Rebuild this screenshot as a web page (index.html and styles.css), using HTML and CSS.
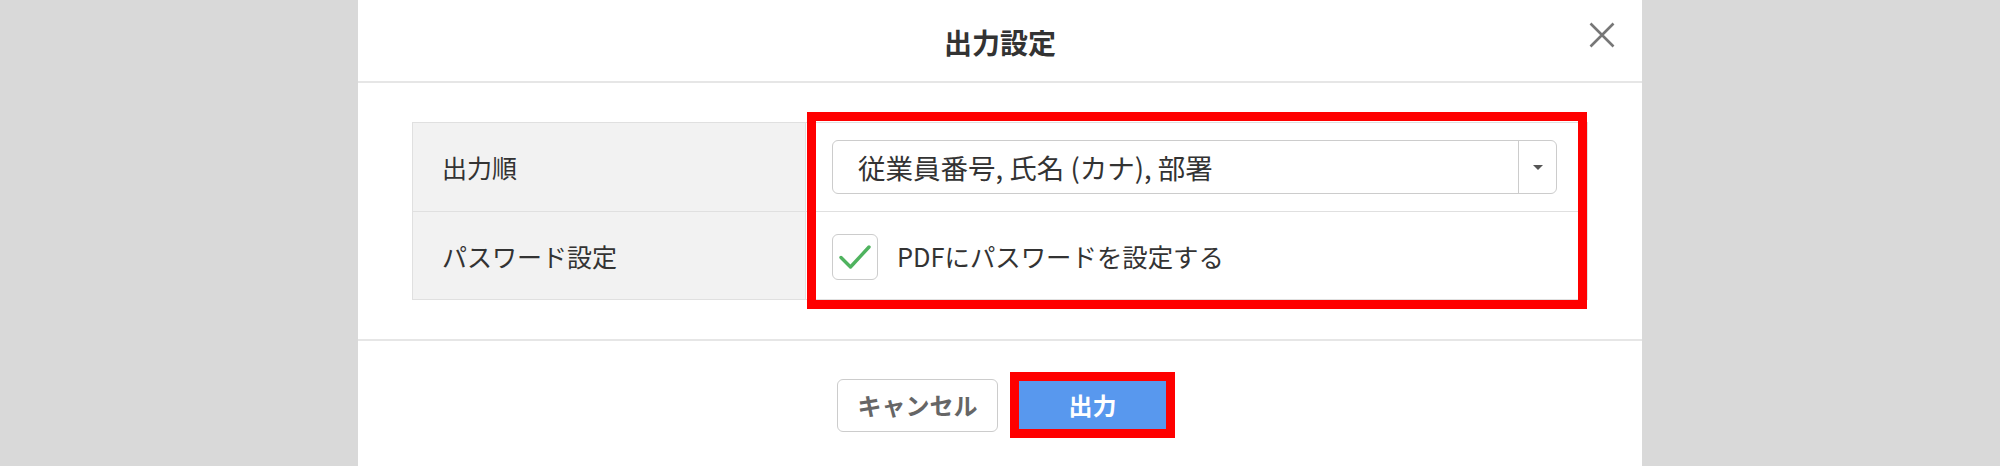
FILE: index.html
```html
<!DOCTYPE html>
<html lang="ja">
<head>
<meta charset="utf-8">
<title>出力設定</title>
<link rel="stylesheet" href="styles.css">
</head>
<body>
<div class="modal">
  <div class="modal-header">
    <h1 class="modal-title">出力設定</h1>
    <button class="close-btn" aria-label="閉じる">
      <svg width="26" height="26" viewBox="0 0 26 26"><path d="M1.5 1.5 L24.5 24.5 M24.5 1.5 L1.5 24.5" stroke="#777" stroke-width="2.6" fill="none"/></svg>
    </button>
  </div>
  <div class="modal-body">
    <div class="settings">
      <div class="row">
        <div class="label">出力順</div>
        <div class="value">
          <div class="select">
            <span class="select-text">従業員番号, 氏名 (カナ), 部署</span>
            <span class="select-arrow"><span class="caret"></span></span>
          </div>
        </div>
      </div>
      <div class="row">
        <div class="label">パスワード設定</div>
        <div class="value">
          <span class="checkbox">
            <svg width="34" height="30" viewBox="0 0 34 30"><path d="M3 15.5 L12.5 25 L31 5" stroke="#4fb35f" stroke-width="3.4" fill="none" stroke-linecap="round" stroke-linejoin="round"/></svg>
          </span>
          <span class="check-label">PDFにパスワードを設定する</span>
        </div>
      </div>
      <div class="highlight"></div>
    </div>
  </div>
  <div class="modal-footer">
    <button class="btn btn-cancel">キャンセル</button>
    <button class="btn btn-primary">出力</button>
  </div>
</div>
</body>
</html>
```
FILE: styles.css
```css
* { box-sizing: border-box; }
html, body { margin: 0; padding: 0; }
body {
  background: #d9d9d9;
  font-family: "Noto Sans CJK JP", "Noto Sans", sans-serif;
  color: #333;
  height: 466px;
  overflow: hidden;
}
.modal {
  width: 1284px;
  margin: 0 auto;
  background: #fff;
  height: 466px;
}
.modal-header {
  height: 83px;
  border-bottom: 2px solid #e6e6e6;
  display: flex;
  align-items: center;
  justify-content: center;
  position: relative;
}
.modal-title {
  margin: 0;
  font-size: 28px;
  font-weight: 700;
  color: #333;
  line-height: 1;
  padding-top: 2px;
}
.close-btn {
  position: absolute;
  right: 27px;
  top: 22px;
  width: 26px;
  height: 26px;
  padding: 0;
  border: 0;
  background: none;
  display: flex;
}
.modal-body {
  padding: 39px 54px 39px 54px;
  border-bottom: 2px solid #e6e6e6;
}
.settings {
  position: relative;
  border: 1px solid #e0e0e0;
}
.row {
  display: flex;
  height: 88px;
}
.row + .row {
  border-top: 1px solid #e0e0e0;
  height: 88px;
}
.label {
  width: 393px;
  background: #f2f2f2;
  border-right: 1px solid #e0e0e0;
  padding-left: 29px;
  display: flex;
  align-items: center;
  font-size: 25px;
  color: #333;
}
.value {
  flex: 1;
  display: flex;
  align-items: center;
  padding: 0 30px 0 26px;
}
.select {
  flex: 1;
  height: 54px;
  border: 1.5px solid #cccccc;
  border-radius: 6px;
  display: flex;
  align-items: stretch;
}
.select-text {
  flex: 1;
  display: flex;
  align-items: center;
  padding-left: 25px;
  font-size: 27.5px;
  color: #333;
}
.select-arrow {
  width: 38px;
  border-left: 1.5px solid #cccccc;
  display: flex;
  align-items: center;
  justify-content: center;
}
.caret {
  width: 0;
  height: 0;
  border-left: 5px solid transparent;
  border-right: 5px solid transparent;
  border-top: 5px solid #555;
}
.checkbox {
  width: 46px;
  height: 46px;
  border: 1.5px solid #cccccc;
  border-radius: 6px;
  display: flex;
  align-items: center;
  justify-content: center;
  margin-left: 0;
  margin-top: 2px;
}
.check-label {
  margin-left: 19px;
  font-size: 25.4px;
  color: #333;
}
.highlight {
  position: absolute;
  left: 394px;
  top: -11px;
  width: 780px;
  height: 197px;
  border: 9px solid #ff0000;
  pointer-events: none;
}
.modal-footer {
  display: flex;
  justify-content: center;
  align-items: center;
  gap: 12px;
  padding: 31px 0 0 12px;
}
.btn {
  font-family: "Noto Sans CJK JP", "Noto Sans", sans-serif;
  font-weight: 700;
  font-size: 24px;
  line-height: 1;
  cursor: pointer;
}
.btn-cancel {
  width: 161px;
  height: 53px;
  background: #fff;
  border: 1.5px solid #cccccc;
  border-radius: 6px;
  color: #666;
}
.btn-primary {
  width: 165px;
  height: 66px;
  background: #5898ee;
  border: 9px solid #ff0000;
  color: #fff;
  padding: 0;
}
```
